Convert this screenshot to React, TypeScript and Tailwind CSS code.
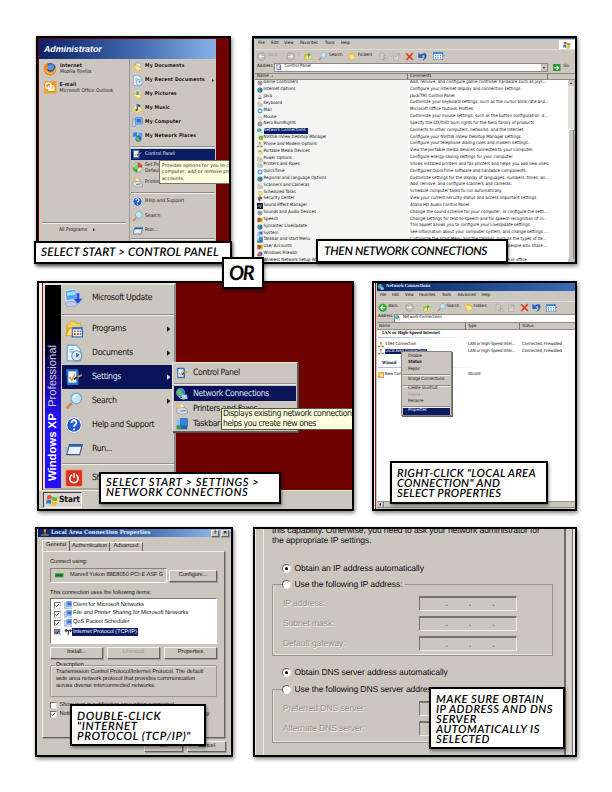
import type { ReactNode } from "react";

type Kind =
  | "folder" | "docs" | "recent" | "pictures" | "music" | "computer" | "network" | "cpanel"
  | "programs" | "printer" | "help" | "search" | "run" | "power" | "firefox" | "outlook"
  | "update" | "taskbar" | "back" | "ghost" | "up" | "copy" | "cut" | "x" | "undo" | "views" | "go"
  | "windows" | "globe" | "java" | "drop" | "shield" | "sound" | "gear" | "people" | "brick" | "nvidia"
  | "card" | "lan" | "tcp" | "progfolder" | "mouse" | "netglobe";

const folder = (
  <>
    <path d="M1 4h5l1 2h7v8H1z" fill="#d9a92c" />
    <path d="M1 14 4 7h12l-3 7z" fill="#ffe27a" stroke="#c8951c" strokeWidth=".6" />
  </>
);

const shapes: Record<Kind, ReactNode> = {
  folder: <><path d="M2 5 7 1l3 2 4 1-2 9-7 2z" fill="#e8b93a" /><path d="M2 5l9-1 4 6-8 5z" fill="#ffe68c" stroke="#cf9f28" strokeWidth=".6" /></>,
  docs: <><path d="M2 6 8 1l5 3 1 9-6 2z" fill="#f0c755" /><path d="M6 2h6l1 6H6z" fill="#fff" stroke="#5a9bd8" strokeWidth=".8" /><path d="M2 6l8 1 5 5-7 3z" fill="#ffe68c" stroke="#cf9f28" strokeWidth=".6" /><path d="M7 4h4" stroke="#4a90d9" strokeWidth=".8" /></>,
  recent: <><path d="M2 1h8l4 4v10H2z" fill="#eaf4ff" stroke="#6b9fd4" /><path d="M4 5h4M4 7h4" stroke="#87b4e0" /><circle cx="10.500" cy="10.500" r="4.500" fill="#dbeefc" stroke="#7a8ea8" /><path d="M10.500 8v3l2-2" stroke="#1b4da0" fill="none" /></>,
  pictures: <><path d="M1 6 7 1l6 3 2 8-7 3z" fill="#f0c755" /><path d="M2 8l8-1 5 4-7 4z" fill="#ffe68c" stroke="#cf9f28" strokeWidth=".6" /><circle cx="8" cy="5.500" r="3.500" fill="#6ab7e8" stroke="#fff" strokeWidth=".7" /><path d="M5 8l3-3 3 3z" fill="#5ca03c" /></>,
  music: <><path d="M1 8 4 4l8 1 3 6-8 4z" fill="#ffe68c" stroke="#cf9f28" strokeWidth=".6" /><path d="M7 9V1l5 2v3L8.500 5v5z" fill="#3454a8" /><ellipse cx="7" cy="10" rx="2" ry="1.500" fill="#3454a8" /></>,
  computer: <><rect x="5" y="1" width="10" height="9" rx="1" fill="#9ccbf7" stroke="#466eb8" /><rect x="6.500" y="2.500" width="7" height="5.500" fill="#2e6fe0" /><path d="M1 3h4v11H1z" fill="#c8d6ee" stroke="#5a78b0" strokeWidth=".7" /><path d="M6 12h9l1 3H5z" fill="#b8c8e8" /></>,
  network: <><path d="M1 2l7-1v7l-7 1z" fill="#3f7be0" stroke="#b8d0f0" /><path d="M9 2l6 0v6l-6 1z" fill="#5597ee" stroke="#b8d0f0" /><circle cx="9.500" cy="11" r="4.500" fill="#2c6cc8" /><path d="M6 9q4-2 4 1t3 3q-4 3-7-1z" fill="#5cc04a" /></>,
  netglobe: <><circle cx="6" cy="6" r="5.500" fill="#3c84d8" stroke="#a8d0f0" strokeWidth=".6" /><path d="M3 2q5-1 4 2t3 3q-1 5-5 3T1 5z" fill="#5cc85a" /><path d="M8 10l6-1 1 5-6 1z" fill="#a8cff4" stroke="#dfe8f8" strokeWidth=".8" /><path d="M4 11q1 4 5 3" stroke="#e8e8f0" fill="none" strokeWidth="1.200" /></>,
  cpanel: <><path d="M1 1h10l1 1v13H2z" fill="#2b74c8" /><path d="M3 3h7v10H3z" fill="#f0f6ff" /><path d="M4 8l2 3 3-6" stroke="#e09a28" strokeWidth="1.300" fill="none" /><path d="M8 10l7-4" stroke="#e08a50" strokeWidth="1.600" /><path d="M8 10l3-2" stroke="#224" strokeWidth="1.400" /></>,
  programs: <><circle cx="8" cy="8" r="7" fill="#d8e3da" stroke="#7f9a9a" /><path d="M8 8V1a7 7 0 0 1 7 7z" fill="#e2452c" /><path d="M8 8v7a7 7 0 0 1-7-7z" fill="#3d9c3a" /><path d="M4 4l5-1-1 7-5 1z" fill="#7fd06a" /></>,
  printer: <><path d="M4 1l6 1 1 5H3z" fill="#fff8c0" stroke="#999" strokeWidth=".6" /><path d="M1 7l10-1 4 3v5l-9 1-5-3z" fill="#d8dce6" stroke="#70788a" strokeWidth=".7" /><path d="M6 11l7-1" stroke="#4a5468" /><circle cx="4" cy="4" r="2.500" fill="#f0c452" /></>,
  help: <><circle cx="8" cy="8" r="7.300" fill="#fff" stroke="#9aa8c8" strokeWidth=".6" /><circle cx="8" cy="8" r="6" fill="#2459c8" /><path d="M5.800 6.200c0-3.500 4.900-3 4.400 0C10 7.700 8 7.500 8 9.500M8 11v1.600" stroke="#fff" strokeWidth="1.600" fill="none" /></>,
  search: <><path d="M1.500 14.500 6 10" stroke="#c98a58" strokeWidth="2.600" /><circle cx="10" cy="5.800" r="4.800" fill="#bfe6fb" stroke="#7fa6cc" strokeWidth="1.200" /><path d="M7.500 5q1-2 3-2" stroke="#fff" fill="none" /></>,
  run: <><path d="M4 4h11.500L13 13H1.500z" fill="#e8f1fb" stroke="#39588c" /><path d="M4 4h11.500L15 6H3.500z" fill="#2a5db0" /><path d="M0 7h3M0 9h2.500" stroke="#8aa0c0" strokeWidth=".7" /></>,
  power: <><rect x=".5" y=".5" width="15" height="15" rx="1.500" fill="#d8321c" stroke="#f4a08c" /><path d="M6.200 5.200a3.700 3.700 0 1 0 3.600 0M8 3.500v4.500" fill="none" stroke="#fff" strokeWidth="1.400" /></>,
  firefox: <><circle cx="8" cy="8" r="7" fill="#2c4fa0" /><circle cx="9" cy="6" r="3.500" fill="#5a9adf" /><path d="M3 2Q0 5 1 10q3 6 9 5 5-2 5-8l-1-3q-.5 7-5 7-4 0-4-3l2-1-2-2 1-2z" fill="#f28a1c" /><path d="M2 9q3 5 8 4 3-1 4-4" stroke="#ffd04a" fill="none" /></>,
  outlook: <><rect x="0" y="0" width="16" height="16" fill="#f0a030" /><rect x="5" y="5" width="9" height="8" fill="#fff3cc" stroke="#c87810" strokeWidth=".7" /><path d="M5 5l4.500 4L14 5" fill="none" stroke="#c87810" strokeWidth=".8" /><circle cx="5.500" cy="6" r="3.500" fill="none" stroke="#fff" strokeWidth="1.500" /></>,
  update: <><path d="M0 1.500l9.500-1.500 1 9-9.500 1.500z" fill="#4aa4ec" stroke="#d0e2f8" /><path d="M1.500 3l7-1 .5 3-7 1z" fill="#a4e0ff" /><ellipse cx="5.500" cy="13.500" rx="5.500" ry="2.300" fill="#c0cae8" stroke="#8290bb" strokeWidth=".6" /><path d="M10 3.500h3v5h3l-4.500 5-4.500-5h3z" fill="#2450d8" stroke="#b8ccff" strokeWidth=".5" /></>,
  taskbar: <><rect x="6" y="1" width="9" height="10" fill="#3684e0" stroke="#123a78" strokeWidth=".7" /><rect x="1" y="2" width="4.500" height="9" fill="#88bfff" /><path d="M1 10h14v5H1z" fill="#1d5fc4" /><path d="M1 10h6v5H1z" fill="#35a03c" /></>,
  back: <><circle cx="8" cy="8" r="7.200" fill="#34a532" stroke="#9bd49a" /><path d="M12 8H5M8 4.500 4.500 8 8 11.500" stroke="#fff" strokeWidth="2" fill="none" /></>,
  ghost: <><circle cx="8" cy="8" r="7" fill="#c2beb6" stroke="#99958d" /><path d="M4 8h7M8 4.500 11.500 8 8 11.500" stroke="#f4f2ee" strokeWidth="2" fill="none" /></>,
  up: <>{folder}<path d="M8 14V7H5l5-6 4 6h-3q0 5-3 7z" fill="#38b032" stroke="#e4ffe0" strokeWidth=".5" /></>,
  copy: <><path d="M2 2h6l2 2v9H2zM7 6h5l2 2v7H7z" fill="#d6d3cc" stroke="#a5a29b" /><path d="M8 10h4l-2 3" stroke="#918e88" fill="none" /></>,
  cut: <><path d="M3 4h6l3 2v9H3z" fill="#d6d3cc" stroke="#a5a29b" /><path d="M6 9l6-7 2 4" stroke="#a5a29b" fill="none" strokeWidth="1.600" /></>,
  x: <path d="M2 2.500 14 14M14 2 2.500 14" stroke="#ea3a1c" strokeWidth="2.700" />,
  undo: <path d="M1 2v8h8L6.500 7.500Q10 3.500 11.500 7t-3 8q7-3 6-9.500T5 5z" fill="#2461c8" stroke="#174a9c" strokeWidth=".6" />,
  views: <><rect x=".5" y="2" width="15" height="12" fill="#fff" stroke="#3b7ad6" /><path d="M0 2h16v3H0z" fill="#3b82e6" /><path d="M3 7.500h2m2 0h2m2 0h2M3 11h2m2 0h2m2 0h2" stroke="#3c6cb8" strokeWidth="1.800" /></>,
  go: <><rect width="16" height="16" fill="#279a36" /><path d="M3 8h8M8 4l4 4-4 4" stroke="#fff" strokeWidth="2.200" fill="none" /></>,
  windows: <g transform="rotate(8 8 8)"><path d="M1 3q3.500-2 6 0v5q-2.500-2-6 0z" fill="#ec5424" /><path d="M8 3q3 2 6.500 0v5q-3.500 2-6.500 0z" fill="#6ab82e" /><path d="M1 9q3.500-2 6 0v5q-2.500-2-6 0z" fill="#2c74dc" /><path d="M8 9q3 2 6.500 0v5q-3.500 2-6.500 0z" fill="#f8bc1c" /></g>,
  globe: <><circle cx="8" cy="8" r="7" fill="#2f74cc" /><path d="M5 2q6 0 3 4t3 4q0 5-4 3T2 8z" fill="#46b04a" /></>,
  java: <><path d="M3 9h9v3q-4 3-9 0z" fill="#5a7dc8" /><path d="M8 1q-4 3 0 7 3-3 0-7z" fill="#e2622c" /></>,
  drop: <><circle cx="8" cy="8" r="6.500" fill="#3a9ae8" /><circle cx="8" cy="8" r="3.500" fill="#e4f4ff" /></>,
  shield: <><path d="M8 1l6 2q0 9-6 12Q2 12 2 3z" fill="#e8c830" /><path d="M8 1l6 2q0 3-1 5H8zM8 8v7Q4 13 3 8z" fill="#3c62c4" /><path d="M8 1v7H3Q2 6 2 3z" fill="#d8402c" /></>,
  sound: <><rect width="16" height="16" fill="#191a50" /><path d="M3 10l3-5 3 7 3-8" stroke="#e4d436" fill="none" strokeWidth="1.700" /></>,
  gear: <><circle cx="8" cy="8" r="5.500" fill="#c0c4cf" stroke="#676c7c" strokeWidth="1.800" /><circle cx="8" cy="8" r="2" fill="#4c5160" /></>,
  people: <><rect x="1" y="2" width="7" height="12" fill="#d64a20" /><rect x="8" y="2" width="7" height="12" fill="#e4a020" /><circle cx="8" cy="7" r="3" fill="#3a7a3a" /></>,
  brick: <><circle cx="9" cy="7" r="6" fill="#3c7cd4" /><path d="M1 7h10v7H1z" fill="#cc4822" /><path d="M1 10h10M5 7v3m3 0v4" stroke="#f0b090" strokeWidth=".8" /></>,
  nvidia: <><rect x="5" y="2" width="11" height="11" fill="#74b71b" /><path d="M0 8q6-6 12 0-6 6-12 0z" fill="#d8f0a8" /><circle cx="7" cy="8" r="2" fill="#3b6a08" /></>,
  card: <><path d="M0 4h15v7H0z" fill="#229838" /><path d="M3 6h4v3H3zM9 6h4v3H9z" fill="#0b5020" /><path d="M2 11v2M5 11v2M8 11v2" stroke="#c8a020" /></>,
  lan: <><rect x="6" y="1" width="4" height="5" fill="#e0b83a" stroke="#765a10" strokeWidth=".7" /><path d="M8 6v5M1 12h14" stroke="#d8a820" strokeWidth="1.800" /><rect x="1" y="10" width="4" height="4" fill="#667" /><rect x="11" y="10" width="4" height="4" fill="#667" /></>,
  tcp: <path d="M1 5h13M8 5v8M4 2v6M11 3l3 2-3 3" stroke="#111" strokeWidth="1.700" fill="none" />,
  progfolder: <>{folder}<path d="M2 5l3-4h4l1 2h4v4H2z" fill="#f4cf58" stroke="#c8951c" strokeWidth=".5" /><rect x="6.500" y="7" width="9" height="8" fill="#fff" stroke="#2c64b4" /><path d="M6.500 7.500h9" stroke="#2c6cd0" strokeWidth="1.600" /><path d="M8 10h1.600m1.200 0h1.600M8 12.500h1.600m1.200 0h1.600" stroke="#c0452c" strokeWidth="1.500" /><path d="M13 10h1.500m-1.500 2.500h1.500" stroke="#3d70d8" strokeWidth="1.500" /></>,
  mouse: <><path d="M4 1q-3 3 3 5" stroke="#888" fill="none" /><ellipse cx="9.500" cy="9.500" rx="5" ry="4" fill="#f0f0ee" stroke="#888" transform="rotate(35 9 9)" /></>,
};

function Icon({ k, className = "" }: { k: Kind; className?: string }) {
  return <svg viewBox="0 0 16 16" className={`block shrink-0 ${className}`}>{shapes[k]}</svg>;
}

function Frame({ className, inner, children, overlay }: { className: string; inner: string; children: ReactNode; overlay: ReactNode }) {
  return (
    <section className={`relative shrink-0 ${className}`}>
      <div className={`h-full w-full overflow-hidden border-black shadow-[1px_2px_4px_rgba(0,0,0,0.5)] ${inner}`}>{children}</div>
      {overlay}
    </section>
  );
}

function Caption({ className, lines }: { className: string; lines: string[] }) {
  return (
    <div className={`absolute z-10 border-2 border-black bg-white font-['Lato',sans-serif] italic whitespace-nowrap text-black shadow-[1px_2px_3px_rgba(0,0,0,0.45)] ${className}`}>
      {lines.map((l) => <div key={l}>{l}</div>)}
    </div>
  );
}

const Arrow = ({ className = "" }: { className?: string }) => (
  <svg viewBox="0 0 4 6" className={`block shrink-0 fill-current ${className}`}><path d="M0 0l4 3-4 3z" /></svg>
);

const Rule = ({ className = "" }: { className?: string }) => (
  <div className={`h-px shrink-0 bg-[#918e87] shadow-[0_1px_0_#f0eee9] ${className}`} />
);

/* ---------- start menu ---------- */

function PlaceRow({ k, label, arrow }: { k: Kind; label: string; arrow?: boolean }) {
  return (
    <div className="flex h-[14.1px] items-center gap-[2px] pl-[1px] font-bold tracking-[0.035em]">
      <Icon k={k} className="size-[11px]" />
      <span>{label}</span>
      {arrow && <Arrow className="ml-[5px] h-[3px] w-[2px]" />}
    </div>
  );
}

function StartMenu() {
  return (
    <div className="flex h-full bg-[#6f0000] pl-px pt-px text-[5px] tracking-[0em] text-[#151515]">
      <div className="flex h-full w-[177px] flex-col bg-[#cbc7bf]">
        <div className="flex h-[20px] shrink-0 items-center bg-linear-to-r from-[#0c2268] via-[#3d63a8] to-[#86b2e8] pl-[5px] pt-px font-['Liberation_Sans',sans-serif] text-[8.800px] font-bold italic text-white">Administrator</div>
        <div className="flex min-h-0 flex-1">
          <div className="flex w-[91px] flex-col border-r border-[#9d9992] pt-[1px]">
            <div className="flex h-[18px] items-center gap-[3px] pl-[4px]">
              <Icon k="firefox" className="size-[14px]" />
              <div className="leading-[6px]"><div className="font-bold tracking-[0.035em]">Internet</div><div>Mozilla Firefox</div></div>
            </div>
            <div className="flex h-[19px] items-center gap-[3px] pl-[5px]">
              <Icon k="outlook" className="size-[12.500px]" />
              <div className="leading-[6px]"><div className="font-bold tracking-[0.035em]">E-mail</div><div>Microsoft Office Outlook</div></div>
            </div>
            <div className="h-[125px]" />
            <Rule className="mx-[3px]" />
            <div className="flex h-[14px] items-center gap-[6px] pl-[20px]">All Programs <Arrow className="h-[3.500px] w-[2px]" /></div>
          </div>
          <div className="flex flex-1 flex-col pl-px pr-[1px] whitespace-nowrap">
            <PlaceRow k="docs" label="My Documents" />
            <PlaceRow k="recent" label="My Recent Documents" arrow />
            <PlaceRow k="pictures" label="My Pictures" />
            <PlaceRow k="music" label="My Music" />
            <PlaceRow k="computer" label="My Computer" />
            <PlaceRow k="network" label="My Network Places" />
            <Rule className="mt-[2px]" />
            <div className="mt-[2px] flex h-[11.500px] items-center gap-[3px] bg-[#0a1c64] pl-[1px] text-[#e6ebf8]"><Icon k="cpanel" className="size-[10px]" />Control Panel</div>
            <div className="flex h-[15px] items-center gap-[2px] pl-[1px]"><Icon k="programs" className="size-[11px]" /><div className="pt-px leading-[6px]">Set Program<br />Defaults</div></div>
            <div className="flex h-[15px] items-center gap-[2px] pl-[1px]"><Icon k="printer" className="size-[11px]" />Printers and Faxes</div>
            <Rule className="mt-[2px]" />
            <div className="flex h-[16px] items-center gap-[2px] pt-px pl-[1px]"><Icon k="help" className="size-[11px]" />Help and Support</div>
            <div className="flex h-[14px] items-center gap-[2px] pl-[1px]"><Icon k="search" className="size-[11px]" />Search</div>
            <div className="flex h-[14px] items-center gap-[2px] pl-[1px]"><Icon k="run" className="size-[11px]" />Run...</div>
            <Rule className="mt-[1px]" />
          </div>
        </div>
      </div>
    </div>
  );
}

/* ---------- explorer windows ---------- */

const applets: [Kind, string, string][] = [
  ["gear", "Game Controllers", "Add, remove, and configure game controller hardware such as joys..."],
  ["globe", "Internet Options", "Configure your Internet display and connection settings."],
  ["java", "Java", "Java(TM) Control Panel"],
  ["printer", "Keyboard", "Customize your keyboard settings, such as the cursor blink rate and..."],
  ["drop", "Mail", "Microsoft Office Outlook Profiles"],
  ["mouse", "Mouse", "Customize your mouse settings, such as the button configuration, d..."],
  ["gear", "Nero BurnRights", "Specify the CD/DVD burn rights for the Nero family of products"],
  ["netglobe", "Network Connections", "Connects to other computers, networks, and the Internet."],
  ["nvidia", "NVIDIA nView Desktop Manager", "Configure your NVIDIA nView Desktop Manager settings."],
  ["lan", "Phone and Modem Options", "Configure your telephone dialing rules and modem settings."],
  ["pictures", "Portable Media Devices", "View the portable media devices connected to your computer."],
  ["printer", "Power Options", "Configure energy-saving settings for your computer."],
  ["printer", "Printers and Faxes", "Shows installed printers and fax printers and helps you add new ones."],
  ["drop", "QuickTime", "Configures QuickTime software and hardware components."],
  ["globe", "Regional and Language Options", "Customize settings for the display of languages, numbers, times, an..."],
  ["printer", "Scanners and Cameras", "Add, remove, and configure scanners and cameras."],
  ["folder", "Scheduled Tasks", "Schedule computer tasks to run automatically."],
  ["shield", "Security Center", "View your current security status and access important settings"],
  ["sound", "Sound Effect Manager", "Azalia HD Audio Control Panel"],
  ["gear", "Sounds and Audio Devices", "Change the sound scheme for your computer, or configure the setti..."],
  ["people", "Speech", "Change settings for text-to-speech and for speech recognition (if in..."],
  ["globe", "Symantec LiveUpdate", "This applet allows you to configure your LiveUpdate settings."],
  ["computer", "System", "See information about your computer system, and change settings ..."],
  ["taskbar", "Taskbar and Start Menu", "Customize the Start Menu and the taskbar, such as the types of ite..."],
  ["people", "User Accounts", "Change user account settings and passwords for people who share ..."],
  ["brick", "Windows Firewall", "Configure the Windows Firewall"],
  ["network", "Wireless Network Setup Wizard", "Set up or add to a wireless network for your home or office"],
];

function ControlPanelWindow() {
  return (
    <div className="flex h-full flex-col bg-[#cbc7bf] pl-px text-[4.400px] tracking-[0em] text-[#111]">
      <div className="h-px shrink-0 bg-[#31527e]" />
      <div className="flex h-[10px] shrink-0 items-center pt-px pl-[3px]">
        <span className="w-[13px]">File</span><span className="w-[13px]">Edit</span><span className="w-[16px]">View</span>
        <span className="w-[25px]">Favorites</span><span className="w-[16px]">Tools</span><span>Help</span>
        <div className="ml-auto flex h-[9px] w-[16px] items-center justify-center bg-white"><Icon k="windows" className="size-[8px]" /></div>
      </div>
      <div className="flex h-[13px] shrink-0 items-center border-t border-[#dedbd5] pl-[2px]">
        <Icon k="ghost" className="size-[9px] -scale-x-100" />
        <span className="ml-[2px] w-[12px] text-[#999]">Back</span><span className="w-[6px]">·</span>
        <Icon k="ghost" className="size-[9px]" /><span className="ml-[3px] w-[6px]">·</span>
        <Icon k="up" className="size-[8px]" />
        <Icon k="search" className="ml-[6px] size-[9px]" /><span className="ml-[2px] w-[18px]">Search</span>
        <Icon k="folder" className="size-[9px]" /><span className="ml-[2px] w-[21px]">Folders</span>
        <Icon k="copy" className="size-[9px]" /><Icon k="cut" className="ml-[4px] size-[9px]" />
        <Icon k="x" className="ml-[4px] size-[9px]" /><Icon k="undo" className="ml-[4px] size-[9px]" />
        <Icon k="views" className="ml-[6px] size-[10px]" /><span className="text-[6px]">-</span>
      </div>
      <div className="flex h-[11px] shrink-0 items-center pl-[2px]">
        <span className="w-[17px]">Address</span>
        <div className="flex h-[9px] w-[274px] items-center border border-[#8c8982] bg-white pl-px">
          <Icon k="cpanel" className="mr-[2px] size-[6.500px]" />Control Panel
          <span className="ml-auto flex h-[7px] w-[6px] items-center justify-center bg-[#cbc7bf] text-[4px]">▾</span>
        </div>
        <Icon k="go" className="ml-[5px] size-[7.500px]" /><span className="ml-[3px]">Go</span>
      </div>
      <div className="flex h-[7px] shrink-0 items-stretch border-y border-[#8b8881] leading-[6px]">
        <span className="w-[153px] border-r border-[#77746d] pl-[2px]">Name &nbsp;<span className="text-[#777]">▴</span></span><span className="w-[140px] border-r border-[#77746d] pl-[2px]">Comments</span>
      </div>
      <div className="flex min-h-0 flex-1 bg-white">
        <div className="w-[153px] shrink-0 bg-[#f4f4f3] pl-[2px]">
          {applets.map(([k, name]) => (
            <div key={name} className="flex h-[6.840px] items-center gap-[0.500px]">
              <Icon k={k} className="size-[6px]" />
              <span className={name === "Network Connections" ? "h-[6px] bg-[#0a1c64] pr-[2px] leading-[6px] text-white" : "leading-[6px]"}>{name}</span>
            </div>
          ))}
        </div>
        <div className="flex-1 overflow-hidden pl-[2px]">
          {applets.map(([, name, note]) => <div key={name} className="h-[6.840px] leading-[6.840px] whitespace-nowrap">{note}</div>)}
        </div>
        <div className="flex w-[6px] flex-col bg-[#e4e1dc]">
          <div className="flex h-[6px] items-center justify-center bg-[#cbc7bf] text-[4px]">▴</div>
          <div className="mt-[43px] w-full flex-1 border-l border-t border-white bg-[#cbc7bf] shadow-[inset_-1px_0_#85827c]" />
          <div className="h-[3px] bg-[#cbc7bf]" />
        </div>
        <div className="w-px bg-[#aaa]" />
      </div>
    </div>
  );
}

function ConnectionsWindow() {
  const cell = "shrink-0 whitespace-nowrap";
  return (
    <div className="flex h-full bg-[#cbc7bf] text-[4.300px] tracking-[-0.03em] text-[#111]">
      <div className="w-[2px] shrink-0 border-r border-[#8d2020] bg-[#f2efec]" />
      <div className="flex min-w-0 flex-1 flex-col pl-px">
        <div className="flex h-[8px] shrink-0 items-center gap-[2px] bg-linear-to-r from-[#0b2368] to-[#376cb4] pl-[1px] font-['DejaVu_Serif_Condensed','DejaVu_Serif',serif] text-[4.300px] font-bold text-[#dbe4f7]"><Icon k="netglobe" className="size-[6px]" />Network Connections</div>
        <div className="flex h-[10px] shrink-0 items-center pt-px pl-[3px]">
          <span className="w-[12px]">File</span><span className="w-[13px]">Edit</span><span className="w-[14px]">View</span><span className="w-[23px]">Favorites</span>
          <span className="w-[15.500px]">Tools</span><span className="w-[24px]">Advanced</span><span>Help</span>
        </div>
        <div className="flex h-[12px] shrink-0 items-center border-t border-[#dedbd5] pl-[1px]">
          <Icon k="back" className="size-[9.500px]" /><span className="ml-[1px] w-[12px]">Back</span><span className="w-[4px]">·</span>
          <Icon k="ghost" className="size-[9px]" /><span className="ml-[3px] w-[6px]">·</span><Icon k="up" className="size-[8px]" />
          <Icon k="search" className="ml-[6px] size-[9px]" /><span className="ml-[1px] w-[17px]">Search</span>
          <Icon k="folder" className="size-[9px]" /><span className="ml-[1px] w-[21px]">Folders</span>
          <Icon k="copy" className="size-[9px]" /><Icon k="cut" className="ml-[3px] size-[9px]" />
          <Icon k="x" className="ml-[4px] size-[9px]" /><Icon k="undo" className="ml-[3px] size-[9px]" /><Icon k="views" className="ml-[5px] size-[10px]" /><span className="text-[6px]">-</span>
        </div>
        <div className="flex h-[9px] shrink-0 items-center pl-[1px]">
          <span className="w-[16px]">Address</span>
          <div className="flex h-[8px] flex-1 items-center gap-[2px] border-l border-t border-[#8c8982] bg-white"><Icon k="netglobe" className="size-[6px]" />Network Connections</div>
        </div>
        <div className="flex h-[8px] shrink-0 items-stretch border-b border-t border-[#8b8881] leading-[7px]">
          <span className="w-[89px] border-r border-[#777] pl-[2px]">Name</span><span className="w-[54px] border-r border-[#777] pl-[2px]">Type</span><span className="pl-[2px]">Status</span>
        </div>
        <div className="flex min-h-0 flex-1 flex-col bg-white pl-[1px]">
          <div className="h-[7px] pl-[4px] font-['DejaVu_Serif_Condensed','DejaVu_Serif',serif] text-[4.300px] leading-[7px] font-bold">LAN or High-Speed Internet</div>
          <div className="mb-[3.500px] h-px w-[100px] bg-linear-to-r from-[#a8bbe4] to-white" />
          <div className="flex h-[7px] items-center leading-[6px]"><Icon k="lan" className="mr-[1px] size-[6px]" /><span className={`w-[83px] ${cell}`}>1394 Connection</span><span className={`w-[54px] ${cell}`}>LAN or High-Speed Inter...</span><span>Connected, Firewalled</span></div>
          <div className="flex h-[7px] items-center leading-[6px]"><Icon k="lan" className="mr-[1px] size-[6px]" /><span className={`w-[83px] ${cell}`}><span className="bg-[#0a1c64] pr-[1px] text-white">Local Area Connection</span></span><span className={`w-[54px] ${cell}`}>LAN or High-Speed Inter...</span><span>Connected, Firewalled</span></div>
          <div className="mt-[5px] h-[6px] pl-[4px] font-['DejaVu_Serif_Condensed','DejaVu_Serif',serif] text-[4.300px] leading-[6px] font-bold">Wizard</div>
          <div className="mb-[4px] h-px w-[100px] bg-linear-to-r from-[#a8bbe4] to-white" />
          <div className="flex h-[7px] items-center leading-[6px]"><Icon k="outlook" className="mr-[1px] size-[6px]" /><span className={`w-[83px] ${cell}`}>New Connection Wizard</span><span>Wizard</span></div>
        </div>
        <div className="flex h-[6px] shrink-0 items-center border-t border-[#96938c] pl-[2px]"><Arrow className="h-[3px] w-[2px] rotate-180" /><span className="ml-[2px] h-full border-l border-[#777]" /></div>
        <div className="h-[2px] shrink-0 border-t border-[#888]" />
      </div>
    </div>
  );
}

function ContextMenu() {
  return (
    <div className="absolute top-[70px] left-[29px] flex h-[65px] w-[51px] flex-col border border-[#88857e] bg-[#cbc7bf] p-px text-[4.400px] leading-[6.400px] tracking-[-0.03em] whitespace-nowrap text-[#1c1c1c] shadow-[1px_1px_0_#66635e]">
      <div className="pt-[1px] pl-[5px]">Disable</div><div className="pl-[5px] font-bold">Status</div><div className="pl-[5px]">Repair</div>
      <Rule className="my-[1px]" />
      <div className="pl-[5px] leading-[8px]">Bridge Connections</div>
      <Rule className="my-[0.500px]" />
      <div className="pl-[5px]">Create Shortcut</div><div className="pl-[5px] text-[#9b978f]">Delete</div><div className="pl-[5px]">Rename</div>
      <Rule className="my-[1px]" />
      <div className="mt-auto bg-[#0a1c64] pl-[5px] text-[#e3e8f6]">Properties</div>
    </div>
  );
}

/* ---------- classic menu ---------- */

function BigRow({ k, label, arrow, active }: { k: Kind; label: string; arrow?: boolean; active?: boolean }) {
  return (
    <div className={`flex h-[24px] shrink-0 items-center pl-[3px] pr-[4px] ${active ? "bg-[#0a1258] text-[#dfe5f5]" : ""}`}>
      <Icon k={k} className="size-[18px]" />
      <span className="ml-[9px]">{label}</span>
      {arrow && <Arrow className="ml-auto h-[6px] w-[3.500px]" />}
    </div>
  );
}

function ClassicDesktop() {
  return (
    <div className="flex h-full flex-col bg-[#6f0000] text-[8.700px] tracking-[-0.045em] text-[#141414]">
      <div className="flex h-[207px] shrink-0">
        <div className="w-[4px] shrink-0 border-r border-[#7b1010] bg-[#f4f1ef]" />
        <div className="flex w-[133px] border-2 border-[#e5e2dc] border-r-[#8d8a84] border-b-[#aaa69f] bg-[#cbc7bf]">
          <div className="flex w-[16px] shrink-0 items-center bg-linear-to-b from-black from-20% via-[#160c80] via-45% to-[#2510f4] to-65%">
            <div className="h-full w-full rotate-180 pt-[7px] font-['Liberation_Sans',sans-serif] text-[11.300px] leading-[16px] tracking-[0em] whitespace-nowrap text-[#c9c8dc] [writing-mode:vertical-rl]"><b className="text-white">Windows XP</b>&nbsp; Professional</div>
          </div>
          <div className="flex min-w-0 flex-1 flex-col pt-[1px] pl-[1px]">
            <BigRow k="update" label="Microsoft Update" />
            <Rule className="mt-[4px] mb-[2px]" />
            <BigRow k="progfolder" label="Programs" arrow />
            <BigRow k="recent" label="Documents" arrow />
            <BigRow k="cpanel" label="Settings" arrow active />
            <BigRow k="search" label="Search" arrow />
            <BigRow k="help" label="Help and Support" />
            <BigRow k="run" label="Run..." />
            <Rule className="mt-[2px] mb-[2px]" />
            <BigRow k="power" label="Shut Down..." />
          </div>
        </div>
      </div>
      <div className="flex flex-1 items-center border-t border-[#eeeae4] bg-[#cbc7bf] pl-[4px]">
        <div className="flex h-[16px] w-[39px] items-center gap-[1px] border border-[#45433f] border-r-white border-b-white bg-[#d9d6d0] pl-[2px] text-[8.600px] font-bold tracking-[-0.03em]"><Icon k="windows" className="size-[12px]" />Start</div>
      </div>
    </div>
  );
}

function SubMenu() {
  const row = "flex h-[15px] shrink-0 items-center gap-[5px] pt-px pl-[2px]";
  return (
    <div className="absolute top-[81px] left-[135px] flex h-[70px] w-[126px] flex-col border border-[#ece9e3] border-r-[#65625d] border-b-[#65625d] bg-[#cbc7bf] p-px text-[8.700px] tracking-[-0.045em] whitespace-nowrap text-[#141414] shadow-[1px_1px_0_#5c4c48]">
      <div className="flex h-[17px] shrink-0 items-center gap-[5px] pt-[1px] pl-[2px]"><Icon k="cpanel" className="size-[12px]" />Control Panel</div>
      <Rule className="mt-[2px] mb-[2px]" />
      <div className={`bg-[#0a1258] text-[#dfe5f5] ${row}`}><Icon k="netglobe" className="size-[12px]" />Network Connections</div>
      <div className={row}><Icon k="printer" className="size-[12px]" />Printers and Faxes</div>
      <div className={row}><Icon k="taskbar" className="size-[12px]" />Taskbar and Start Menu</div>
    </div>
  );
}

/* ---------- dialogs ---------- */

const bevel = "border border-[#f4f2ee] border-r-[#65625d] border-b-[#65625d] shadow-[1px_1px_0_#a09d96]";

const Button = ({ className = "", children }: { className?: string; children: ReactNode }) => (
  <div className={`flex shrink-0 items-center justify-center bg-[#cbc7bf] ${bevel} ${className}`}>{children}</div>
);

const Check = ({ on, dim }: { on?: boolean; dim?: boolean }) => (
  <span className={`flex size-[6.500px] shrink-0 items-center justify-center border border-[#77746e] border-r-[#ddd] border-b-[#ddd] ${dim ? "bg-[#7f88ac]" : "bg-white"}`}>
    {on && <svg viewBox="0 0 8 8" className="size-[5px]"><path d="M1 4l2 2 4-5" fill="none" stroke="#111" strokeWidth="1.500" /></svg>}
  </span>
);

function PropertiesDialog() {
  const items: [Kind, string][] = [
    ["computer", "Client for Microsoft Networks"],
    ["computer", "File and Printer Sharing for Microsoft Networks"],
    ["computer", "QoS Packet Scheduler"],
    ["tcp", "Internet Protocol (TCP/IP)"],
  ];
  return (
    <div className="flex h-full flex-col bg-[#cbc7bf] pl-[1px] font-['Liberation_Sans',sans-serif] text-[5.700px] tracking-[-0.01em] text-[#111]">
      <div className="flex h-[8px] shrink-0 items-center bg-linear-to-r from-[#0b2368] via-[#3c63a8] to-[#a2c5ef] pl-[3px] pr-[2px] font-bold text-[#e5ecfa]">
        <Icon k="lan" className="mr-[2px] size-[8px]" /><span className="flex-1 pt-px font-['DejaVu_Serif_Condensed','DejaVu_Serif',serif] text-[5.800px] tracking-[0.005em]">Local Area Connection Properties</span>
        <Button className="h-[7px] w-[8px] text-[5px] text-black">?</Button><Button className="ml-[2px] h-[7px] w-[8px] text-[5px] text-black">✕</Button>
      </div>
      <div className="mt-[3px] flex h-[11px] shrink-0 items-end pl-[4px]">
        <span className="flex h-[11px] w-[28px] items-center justify-center border-t border-l border-white border-r border-r-[#65625d]">General</span>
        <span className="flex h-[9px] w-[40px] items-center justify-center border-t border-t-white border-r border-r-[#65625d]">Authentication</span>
        <span className="flex h-[9px] w-[33px] items-center justify-center border-t border-t-white border-r border-r-[#65625d]">Advanced</span>
      </div>
      <div className={`ml-[4px] flex h-[187px] w-[183px] shrink-0 flex-col px-[7px] ${bevel}`}>
        <div className="mt-[5px] h-[11px] leading-[10px]">Connect using:</div>
        <div className="flex items-center">
          <div className="flex h-[15px] w-[118px] items-center gap-[6px] border border-[#85827b] border-r-white border-b-white pl-[4px] tracking-[-0.01em] whitespace-nowrap text-[#222]"><Icon k="card" className="size-[9px]" />Marvell Yukon 88E8050 PCI-E ASF G</div>
          <Button className="ml-[2px] h-[12px] w-[48px]">Configure...</Button>
        </div>
        <div className="mt-[5px] h-[10px] leading-[10px]">This connection uses the following items:</div>
        <div className="h-[46px] border border-[#77746e] border-r-white border-b-white bg-white pt-[2px] pl-[3px]">
          {items.map(([k, t]) => (
            <div key={t} className="flex h-[8.900px] items-center">
              <Check on dim={k === "tcp"} /><Icon k={k} className="ml-[3px] size-[8.500px]" />
              <span className={k === "tcp" ? "bg-[#0a1c64] px-[1px] leading-[8px] text-white" : "pl-px"}>{t}</span>
            </div>
          ))}
        </div>
        <div className="mt-[3px] flex justify-between">
          <Button className="h-[12px] w-[53px]">Install...</Button>
          <Button className="h-[12px] w-[53px] text-[#99958e]">Uninstall</Button>
          <Button className="h-[12px] w-[53px]">Properties</Button>
        </div>
        <fieldset className="mt-[3px] h-[35px] rounded-[1px] border border-[#9b9790] px-[5px] leading-[7px] whitespace-nowrap shadow-[inset_1px_1px_#e8e5e0]">
          <legend className="-ml-px px-px leading-[7px]">Description</legend>
          Transmission Control Protocol/Internet Protocol. The default<br />wide area network protocol that provides communication<br />across diverse interconnected networks.
        </fieldset>
        <div className="mt-[4px] flex h-[9px] items-center gap-[3px] whitespace-nowrap"><Check />Show icon in notification area when connected</div>
        <div className="flex h-[9px] items-center gap-[3px] whitespace-nowrap"><Check on />Notify me when this connection has limited or no connectivity</div>
      </div>
      <div className="mt-[3px] flex gap-[4px] pl-[106px]"><Button className="h-[11px] w-[39px]">OK</Button><Button className="h-[11px] w-[39px]">Cancel</Button></div>
    </div>
  );
}

const Radio = ({ on }: { on?: boolean }) => (
  <span className="flex size-[8.500px] shrink-0 items-center justify-center rounded-full border border-[#65625d] border-r-[#eee] border-b-[#eee] bg-white">
    {on && <span className="size-[3px] rounded-full bg-black" />}
  </span>
);

function Field({ label }: { label: string }) {
  return (
    <div className="flex h-[20.300px] items-center text-[#96938c]">
      <span className="w-[136px] tracking-[-0.01em] [text-shadow:0.500px_0.500px_0_#f5f3ef]">{label}</span>
      <span className="flex h-[15px] w-[98px] items-center justify-center gap-[21px] border border-t-2 border-[#77746e] border-r-[#eeebe6] border-b-[#eeebe6] pl-[4px] text-[9px] leading-[9px] font-bold text-[#77746e]"><span>.</span><span>.</span><span>.</span></span>
    </div>
  );
}

function IpDialog() {
  return (
    <div className="flex h-full bg-[#cbc7bf] font-['Liberation_Sans',sans-serif] text-[8.600px] tracking-[-0.013em] text-[#111]">
      <div className="w-[9px] shrink-0 border-r border-[#eeece8] border-l border-l-[#eeece8]" />
      <div className="w-[300px] shrink-0 pl-[8px] whitespace-nowrap">
        <div className="-mt-[4px] leading-[10px]">this capability. Otherwise, you need to ask your network administrator for<br />the appropriate IP settings.</div>
        <div className="mt-[18px] flex h-[11px] items-center gap-[4px] pl-[10px]"><Radio on />Obtain an IP address automatically</div>
        <fieldset className="mt-[5px] h-[77px] w-[281px] border border-[#989590] pr-[9px] pl-[10px] shadow-[inset_1px_-1px_#e8e5e0]">
          <legend className="-ml-px flex h-[11px] items-center gap-[4px] pr-[3px]"><Radio />Use the following IP address:</legend>
          <div className="pt-[3px]"><Field label="IP address:" /><Field label="Subnet mask:" /><Field label="Default gateway:" /></div>
        </fieldset>
        <div className="mt-[11px] flex h-[11px] items-center gap-[4px] pl-[10px]"><Radio on />Obtain DNS server address automatically</div>
        <fieldset className="mt-[6px] h-[59px] w-[281px] border border-[#989590] pr-[9px] pl-[10px] shadow-[inset_1px_-1px_#e8e5e0]">
          <legend className="-ml-px flex h-[11px] items-center gap-[4px] pr-[3px]"><Radio />Use the following DNS server addresses:</legend>
          <div className="pt-[3px]"><Field label="Preferred DNS server:" /><Field label="Alternate DNS server:" /></div>
        </fieldset>
      </div>
      <div className="ml-auto w-[9px] border-l-2 border-r border-[#6f6c67] bg-[#d6d3cd]" />
      <div className="w-[2px] bg-[#eee]" />
    </div>
  );
}

export default function App() {
  return (
    <main className="h-[792px] w-[612px] overflow-hidden bg-white pt-[36px] font-['DejaVu_Sans_Condensed','DejaVu_Sans',sans-serif] leading-none [text-rendering:geometricPrecision] [font-stretch:condensed]">
      <div className="flex h-[245px] pl-[36px]">
        <Frame
          className="h-[228px] w-[195px]" inner="border-2"
          overlay={<>
            <div className="absolute top-[124px] left-[123px] h-[24px] w-[70px] overflow-hidden border border-r-0 border-[#77746c] bg-[#feffdc] pt-[2px] pl-[2px] text-[5px] leading-[6.300px] tracking-[0.02em] whitespace-nowrap text-[#222]">Provides options for you to customize<br />computer, add or remove programs<br />accounts.</div>
            <Caption className="top-[205px] -left-[2px] h-[23px] w-[198px] pt-[1px] pl-[5px] text-[11.800px] leading-[15px] font-semibold tracking-[0.012em]" lines={["SELECT START > CONTROL PANEL"]} />
            <Caption className="top-[221px] left-[186px] h-[32px] w-[42px] pl-[5px] text-[20px] leading-[28px] font-bold tracking-[-0.06em]" lines={["OR"]} />
          </>}
        >
          <StartMenu />
        </Frame>
        <Frame
          className="ml-[21px] h-[228px] w-[325px]" inner="border-[2.500px]"
          overlay={<Caption className="top-[203px] left-[64px] h-[24px] w-[192px] pt-[2px] pl-[6px] text-[11.800px] leading-[15px] font-semibold tracking-[-0.025em]" lines={["THEN NETWORK CONNECTIONS"]} />}
        >
          <ControlPanelWindow />
        </Frame>
      </div>
      <div className="flex h-[246px] pl-[37px]">
        <Frame
          className="h-[230px] w-[317px]" inner="border-2"
          overlay={<>
            <SubMenu />
            <div className="absolute top-[127px] left-[184px] h-[22px] w-[131px] overflow-hidden border border-r-0 border-[#55524c] bg-[#feffdc] pt-[1px] pl-[1px] text-[8.700px] leading-[9.500px] tracking-[-0.055em] whitespace-nowrap text-[#1a1a1a]">Displays existing network connections and<br />helps you create new ones</div>
            <Caption className="top-[191px] left-[62px] h-[32px] w-[182px] pt-[4px] pl-[5px] text-[11.200px] leading-[10.400px] font-semibold tracking-[0.055em]" lines={["SELECT START > SETTINGS >", "NETWORK CONNECTIONS"]} />
          </>}
        >
          <ClassicDesktop />
        </Frame>
        <Frame
          className="ml-[18px] h-[230px] w-[205px]" inner="border-2"
          overlay={<>
            <ContextMenu />
            <Caption className="top-[180px] left-[18px] h-[43px] w-[158px] pt-[5.500px] pl-[5px] text-[11.200px] leading-[10.200px] font-semibold tracking-[0.025em]" lines={['RIGHT-CLICK "LOCAL AREA', 'CONNECTION" AND', "SELECT PROPERTIES"]} />
          </>}
        >
          <ConnectionsWindow />
        </Frame>
      </div>
      <div className="flex h-[230px] pl-[35px]">
        <Frame
          className="h-[230px] w-[198px]" inner="border-2"
          overlay={<Caption className="top-[177px] left-[35px] h-[42px] w-[136px] pt-[5.500px] pl-[5px] text-[11.400px] leading-[10.200px] font-semibold tracking-[0.055em]" lines={["DOUBLE-CLICK", '"INTERNET', 'PROTOCOL (TCP/IP)"']} />}
        >
          <PropertiesDialog />
        </Frame>
        <Frame
          className="ml-[20px] h-[230px] w-[324px]" inner="border-2"
          overlay={<Caption className="top-[160px] left-[176px] h-[62px] w-[136px] pt-[5.500px] pl-[5px] text-[11.200px] leading-[10.200px] font-semibold tracking-[0.045em]" lines={["MAKE SURE OBTAIN", "IP ADDRESS AND DNS", "SERVER", "AUTOMATICALLY IS", "SELECTED"]} />}
        >
          <IpDialog />
        </Frame>
      </div>
    </main>
  );
}
